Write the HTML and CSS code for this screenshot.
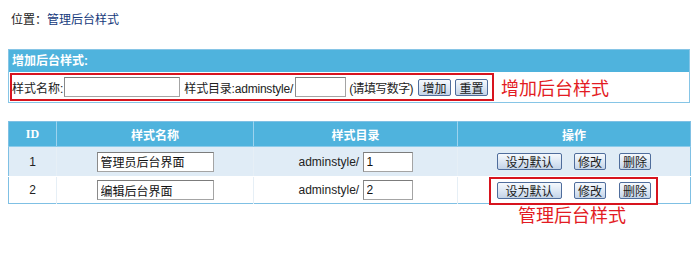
FILE: index.html
```html
<!DOCTYPE html>
<html>
<head>
<meta charset="utf-8">
<link rel="stylesheet" href="styles.css">
</head>
<body>
<div class="loc">位置：<a class="loc-link">管理后台样式</a></div>

<div class="panel">
  <div class="panel-head">增加后台样式:</div>
  <div class="panel-row">
    <div class="redbox">
      <span class="lbl">样式名称:</span>
      <input class="txt w-name" type="text">
      <span class="lbl l2">样式目录:adminstyle/</span>
      <input class="txt w-dir" type="text">
      <span class="lbl l3">(请填写数字)</span>
      <button class="btn b-add">增加</button>
      <button class="btn b-reset">重置</button>
    </div>
    <span class="note">增加后台样式</span>
  </div>
</div>

<table class="grid">
  <colgroup>
    <col class="c-id"><col class="c-name"><col class="c-dir"><col class="c-op">
  </colgroup>
  <thead>
    <tr><th>ID</th><th>样式名称</th><th>样式目录</th><th>操作</th></tr>
  </thead>
  <tbody>
    <tr class="r1">
      <td>1</td>
      <td><input class="txt w-cell" type="text" value="管理员后台界面"></td>
      <td>adminstyle/ <input class="txt w-num" type="text" value="1"></td>
      <td><div class="ops"><button class="btn b-def">设为默认</button><button class="btn b-sm">修改</button><button class="btn b-sm">删除</button></div></td>
    </tr>
    <tr class="r2">
      <td>2</td>
      <td><input class="txt w-cell" type="text" value="编辑后台界面"></td>
      <td>adminstyle/ <input class="txt w-num" type="text" value="2"></td>
      <td><div class="ops marked"><button class="btn b-def">设为默认</button><button class="btn b-sm">修改</button><button class="btn b-sm">删除</button></div></td>
    </tr>
  </tbody>
</table>
<div class="note2">管理后台样式</div>
</body>
</html>
```

FILE: styles.css
```css
body {
  margin: 8px;
  font-family: "Liberation Sans", "Noto Sans CJK SC", sans-serif;
  font-size: 12px;
  color: #222;
  background: #fff;
}
.loc {
  padding: 4px 0 0 3px;
  height: 16px;
  line-height: 16px;
}
.loc-link { color: #163a7c; }

.panel {
  margin-top: 21px;
  width: 680px;
  border: 1px solid #86c5e6;
}
.panel-head {
  height: 22px;
  line-height: 22px;
  padding-left: 3px;
  background: #4fb3dd;
  color: #fff;
  font-weight: bold;
}
.panel-row {
  display: flex;
  align-items: center;
  padding: 1px 0 1px 1px;
}
.redbox {
  display: flex;
  align-items: center;
  height: 28px;
  box-sizing: border-box;
  border: 2px solid #d7141e;
  padding: 0 4px 0 0;
}
.lbl { white-space: nowrap; color: #222; }
.txt {
  box-sizing: border-box;
  height: 20px;
  border: 1px solid #a4a4a4;
  border-top-color: #7c7c7c;
  border-left-color: #8a8a8a;
  padding: 0 3px;
  font: 12px "Liberation Sans", "Noto Sans CJK SC", sans-serif;
  color: #111;
  background: #fff;
  margin: 0;
}
.w-name { width: 116px; margin-left: 1px; }
.l2 { margin-left: 4px; letter-spacing: -0.2px; }
.w-dir { width: 51px; margin-left: 2px; }
.l3 { margin-left: 3px; letter-spacing: -0.6px; }

.btn {
  box-sizing: border-box;
  height: 17px;
  padding: 0;
  margin: 0;
  border: 1px solid #4f6d9c;
  border-radius: 2px;
  background: linear-gradient(#f6f9fd, #dbe6f3 55%, #c4d4e8);
  font: 12px "Noto Sans CJK SC", sans-serif;
  line-height: 15px;
  color: #1b1b1b;
}
.b-add { width: 33px; margin-left: 5px; }
.b-reset { width: 33px; margin-left: 4px; }

.note {
  margin-left: 7px;
  font-family: "Noto Sans CJK SC", sans-serif;
  font-size: 18px;
  line-height: 22px;
  color: #e31b23;
}

.grid {
  margin-top: 18px;
  width: 682px;
  border-collapse: collapse;
  border: 1px solid #7fc0e4;
  table-layout: fixed;
}
.c-id { width: 48px; }
.c-name { width: 197px; }
.c-dir { width: 204px; }
.c-op { width: 233px; }
.grid th {
  height: 24px;
  padding: 0;
  background: #4fb3dd;
  color: #fff;
  font-weight: bold;
  border-left: 1px solid #9dd3ee;
  border-bottom: 1px solid #8ccbea;
}
.grid th:first-child { border-left: 0; font-family: "Liberation Serif", serif; }
.grid td {
  padding: 0;
  text-align: center;
  border-left: 1px solid #e6eff6;
}
.grid td:first-child { border-left: 0; }
.r1 td { height: 29px; background: #e0ecf6; border-bottom: 1px solid #fff; }
.r2 td { height: 26px; background: #fff; }
.w-cell { width: 117px; }
.w-num { width: 50px; }

.ops {
  display: inline-flex;
  align-items: center;
  position: relative;
  vertical-align: middle;
}
.b-def { width: 65px; }
.b-sm { width: 32px; margin-left: 12px; }
.b-sm + .b-sm { margin-left: 13px; }
.marked::after {
  content: "";
  position: absolute;
  left: -8px;
  right: -7px;
  top: -5px;
  bottom: -6px;
  border: 2px solid #d7141e;
}

.note2 {
  margin-left: 510px;
  font-family: "Noto Sans CJK SC", sans-serif;
  font-size: 18px;
  line-height: 20px;
  color: #e31b23;
}
```
